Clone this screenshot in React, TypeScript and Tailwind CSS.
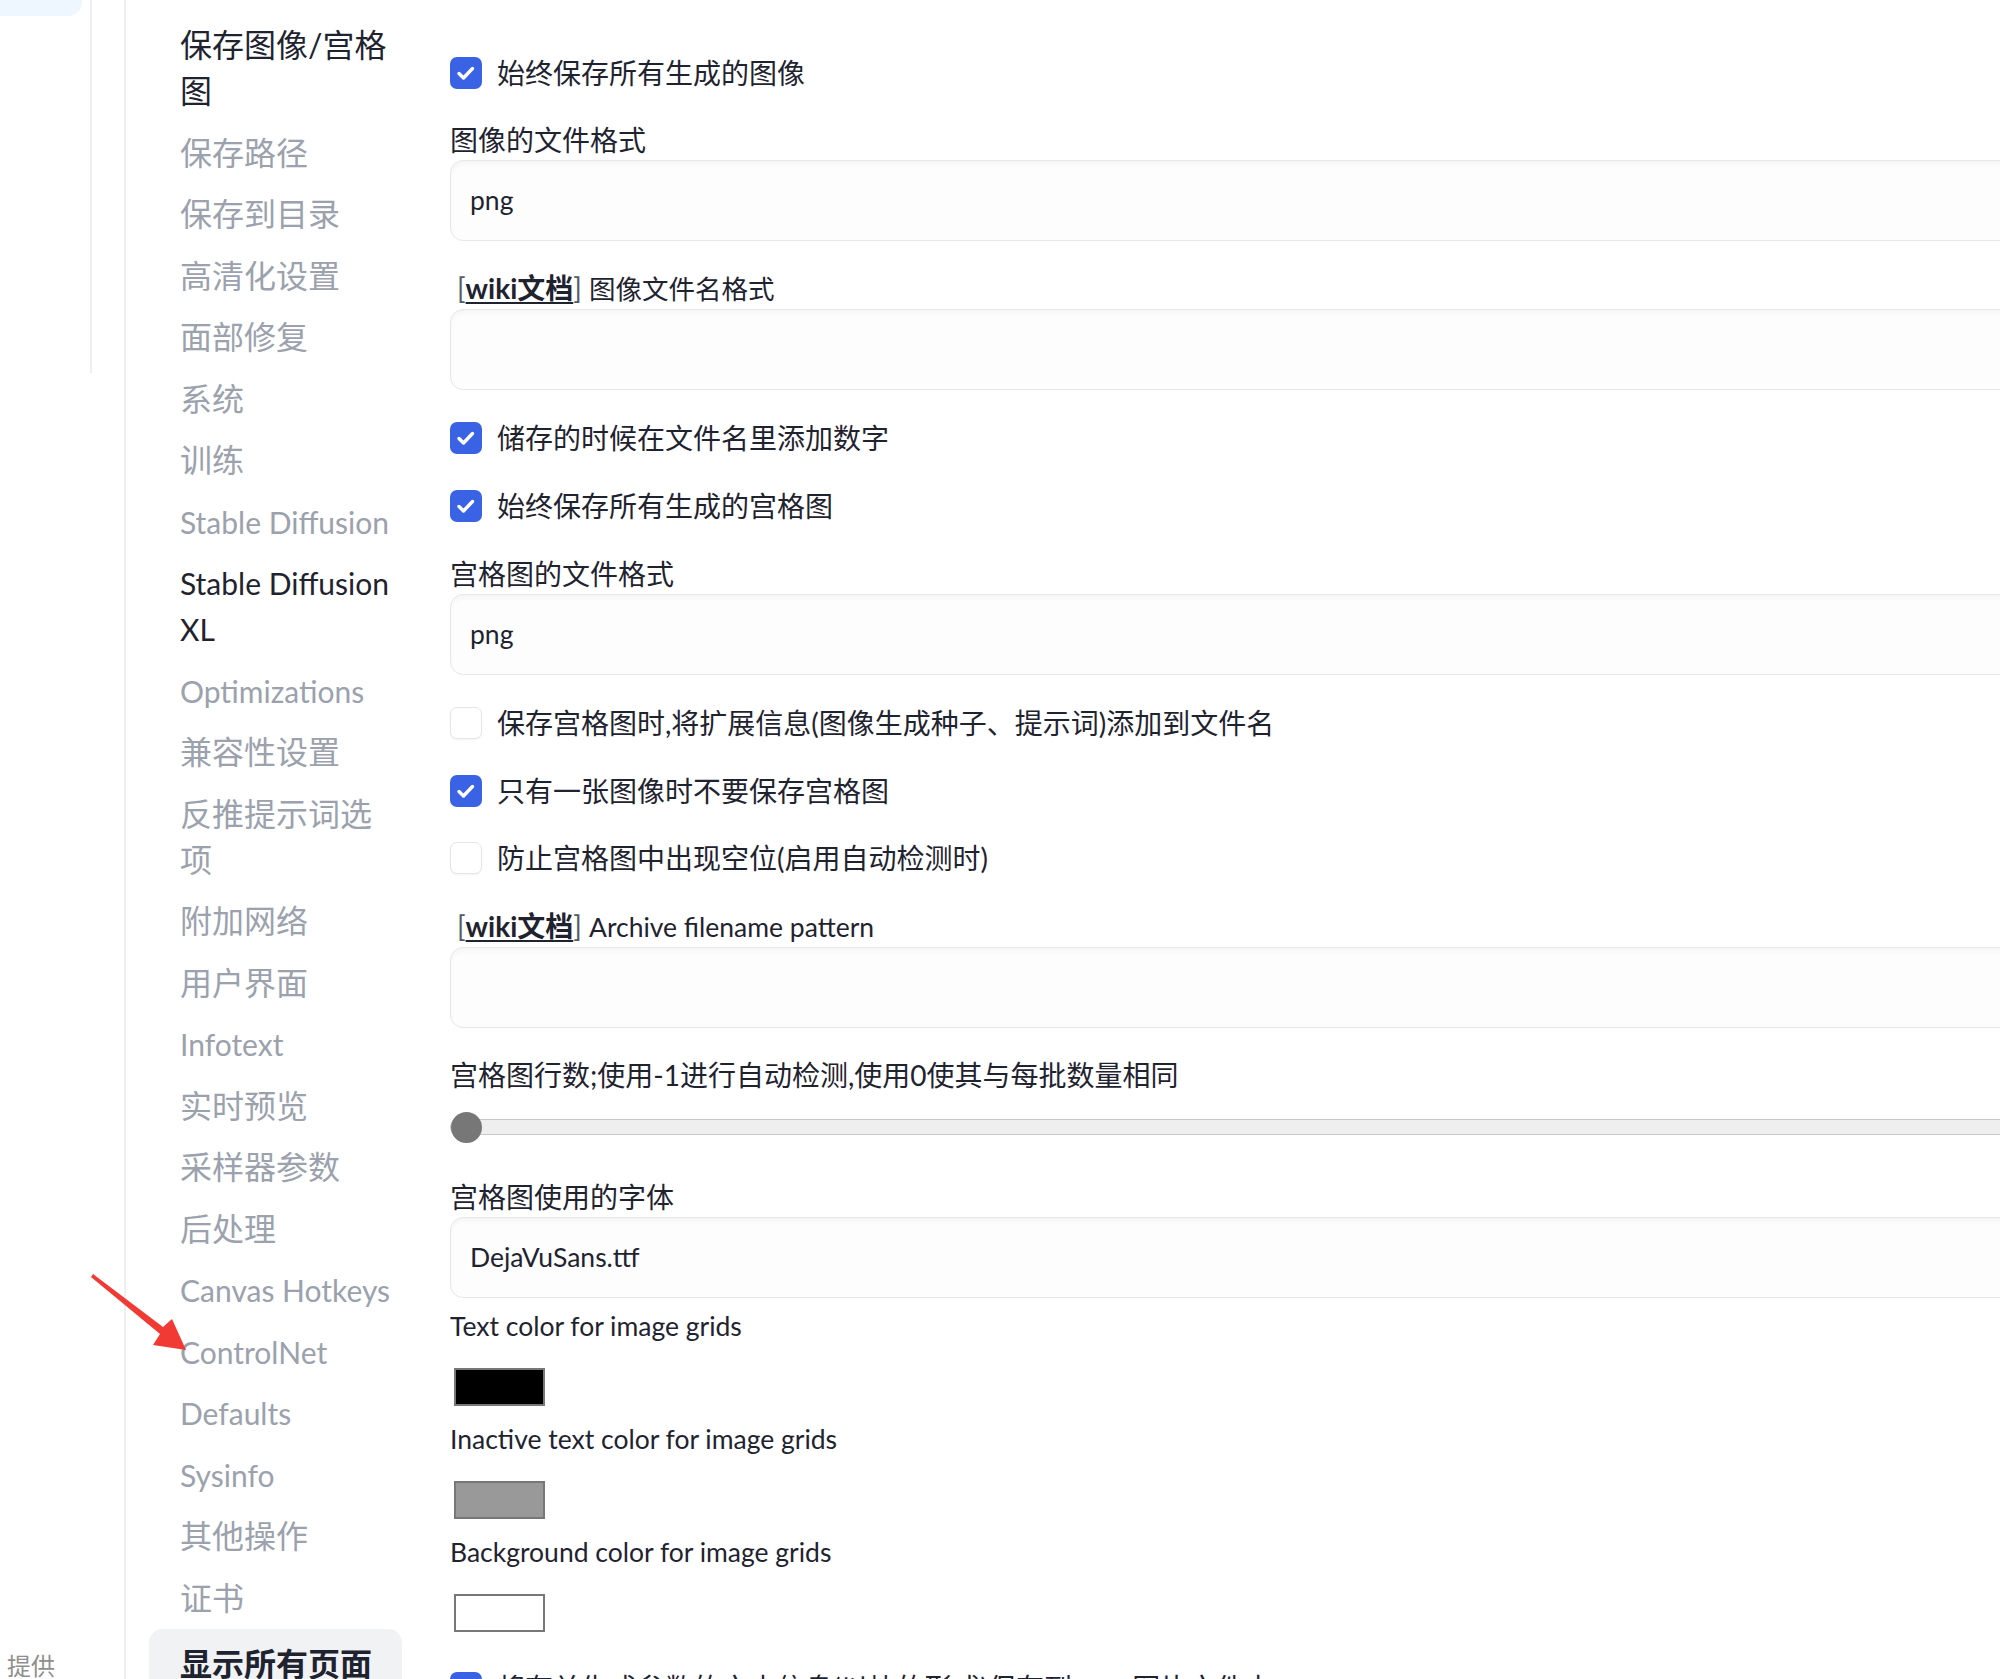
import React from "react";

type NavItem = {
  lines: string[];
  active?: boolean;
  latin?: boolean;
};

const navItems: NavItem[] = [
  { lines: ["保存图像/宫格", "图"], active: true },
  { lines: ["保存路径"] },
  { lines: ["保存到目录"] },
  { lines: ["高清化设置"] },
  { lines: ["面部修复"] },
  { lines: ["系统"] },
  { lines: ["训练"] },
  { lines: ["Stable Diffusion"], latin: true },
  { lines: ["Stable Diffusion", "XL"], active: true, latin: true },
  { lines: ["Optimizations"], latin: true },
  { lines: ["兼容性设置"] },
  { lines: ["反推提示词选", "项"] },
  { lines: ["附加网络"] },
  { lines: ["用户界面"] },
  { lines: ["Infotext"], latin: true },
  { lines: ["实时预览"] },
  { lines: ["采样器参数"] },
  { lines: ["后处理"] },
  { lines: ["Canvas Hotkeys"], latin: true },
  { lines: ["ControlNet"], latin: true },
  { lines: ["Defaults"], latin: true },
  { lines: ["Sysinfo"], latin: true },
  { lines: ["其他操作"] },
  { lines: ["证书"] },
];

const font = "font-['Source_Sans_Pro','Lato','Noto_Sans_CJK_SC',sans-serif]";

function Check({ checked, label, className = "" }: { checked: boolean; label: string; className?: string }) {
  return (
    <div className={`flex h-[40px] shrink-0 items-center gap-[15px] ${className}`}>
      {checked ? (
        <span className="flex h-[32px] w-[32px] shrink-0 items-center justify-center rounded-[7px] bg-[#3a62e4]">
          <svg width="24" height="24" viewBox="0 0 24 24" fill="none">
            <path d="M5 12.5l4.5 4.5 9-9.5" stroke="white" strokeWidth="3.4" strokeLinecap="round" strokeLinejoin="round" />
          </svg>
        </span>
      ) : (
        <span className="h-[32px] w-[32px] shrink-0 rounded-[7px] border-[1.5px] border-[#e3e5ea] bg-white shadow-[0_1px_2px_rgba(0,0,0,0.05)]" />
      )}
      <span className="whitespace-nowrap text-[28px] leading-[40px] text-[#1f2330]">{label}</span>
    </div>
  );
}

function WikiLabel({ text }: { text: string }) {
  return (
    <div className="whitespace-nowrap pl-[7px] text-[28px] leading-[40px] text-[#1f2330]">
      <span className="text-[#555b66]">[</span>
      <span className="font-bold underline decoration-[2px] underline-offset-[3px]">wiki文档</span>
      <span className="text-[#555b66]">]</span> <span className="text-[26.5px]">{text}</span>
    </div>
  );
}

function TextBox({ value }: { value?: string }) {
  return (
    <div className="flex h-[81px] shrink-0 items-center rounded-[13px] border-[1.5px] border-[#e6e7ea] bg-[#fdfdfd] pl-[19px] text-[26.5px] text-[#1f2330] shadow-[inset_0_3px_5px_rgba(0,0,0,0.035)]">
      {value}
    </div>
  );
}

function Field({ label, value, className = "", wiki = false }: { label: string; value?: string; className?: string; wiki?: boolean }) {
  return (
    <div className={`shrink-0 ${className}`}>
      {wiki ? (
        <WikiLabel text={label} />
      ) : (
        <div className="whitespace-nowrap text-[28px] leading-[40px] text-[#1f2330]">{label}</div>
      )}
      <TextBox value={value} />
    </div>
  );
}

function ColorField({ label, color, className = "" }: { label: string; color: string; className?: string }) {
  return (
    <div className={`shrink-0 ${className}`}>
      <div className="whitespace-nowrap text-[26.5px] leading-[40px] text-[#1f2330]">{label}</div>
      <div className={`ml-[4px] mt-[22px] h-[38px] w-[91px] border-2 border-[#777777] ${color}`} />
    </div>
  );
}

export default function App() {
  return (
    <div className={`relative flex h-[1679px] w-[2000px] items-start overflow-hidden bg-white ${font}`}>
      {/* far left strip */}
      <div className="w-[92px] shrink-0">
        <div className="h-[373px] border-r-2 border-[#efeff3]">
          <div className="h-[16px] w-[82px] rounded-br-[14px] bg-[#eef6ff]" />
        </div>
        <div className="mt-[1281px] pl-[7px] text-[24px] leading-[24px] text-[#8f8f8f]">提供</div>
      </div>
      <div className="h-[1679px] w-[34px] shrink-0 border-r-2 border-[#efeff3]" />

      {/* settings nav */}
      <nav className="flex w-[324px] shrink-0 flex-col gap-[15.5px] pl-[54px] pt-[22px] text-[32px] leading-[46px]">
        {navItems.map((item, i) => (
          <div
            key={i}
            className={`shrink-0 whitespace-nowrap ${item.latin ? "text-[30px]" : ""} ${
              item.active ? "text-[#1f2330]" : "text-[#9ba1ad]"
            }`}
          >
            {item.lines.map((l, j) => (
              <div key={j}>{l}</div>
            ))}
          </div>
        ))}
        <div className="-ml-[31px] -mt-[7px] w-[253px] shrink-0 rounded-[14px] bg-[#f1f2f4] pl-[31px] pt-[12px] pb-[10px] font-bold text-[#1f2330]">
          显示所有页面
        </div>
      </nav>

      {/* settings content */}
      <main className="flex w-[1600px] shrink-0 flex-col pt-[53px]">
        <Check checked label="始终保存所有生成的图像" />
        <Field className="mt-[27px]" label="图像的文件格式" value="png" />
        <Field className="mt-[27px]" wiki label="图像文件名格式" />
        <Check className="mt-[28px]" checked label="储存的时候在文件名里添加数字" />
        <Check className="mt-[28px]" checked label="始终保存所有生成的宫格图" />
        <Field className="mt-[28px]" label="宫格图的文件格式" value="png" />
        <Check className="mt-[28px]" checked={false} label="保存宫格图时,将扩展信息(图像生成种子、提示词)添加到文件名" />
        <Check className="mt-[28px]" checked label="只有一张图像时不要保存宫格图" />
        <Check className="mt-[27px]" checked={false} label="防止宫格图中出现空位(启用自动检测时)" />
        <Field className="mt-[28px]" wiki label="Archive filename pattern" />

        <div className="mt-[27px] shrink-0 whitespace-nowrap text-[28px] leading-[40px] text-[#1f2330]">
          宫格图行数;使用-1进行自动检测,使用0使其与每批数量相同
        </div>
        <div className="mt-[16px] flex h-[32px] shrink-0 items-center">
          <div className="relative flex h-[16px] w-full items-center rounded-full border-[1.5px] border-[#c9c9c9] bg-[#efefef]">
            <span className="absolute left-0 h-[31px] w-[31px] rounded-full bg-[#777777]" />
          </div>
        </div>

        <Field className="mt-[34px]" label="宫格图使用的字体" value="DejaVuSans.ttf" />
        <ColorField className="mt-[8px]" label="Text color for image grids" color="bg-black" />
        <ColorField className="mt-[13px]" label="Inactive text color for image grids" color="bg-[#999999]" />
        <ColorField className="mt-[13px]" label="Background color for image grids" color="bg-white" />
        <Check className="mt-[36px]" checked label="将有关生成参数的文本信息(以块的形式)保存到 png 图片文件中" />
      </main>

      {/* annotation arrow */}
      <svg className="absolute left-[85px] top-[1265px]" width="110" height="95" viewBox="85 1265 110 95">
        <polygon points="93,1274 163,1327 172,1319 186,1350 153,1345 160,1334 91,1277" fill="#f23a35" />
      </svg>
    </div>
  );
}
